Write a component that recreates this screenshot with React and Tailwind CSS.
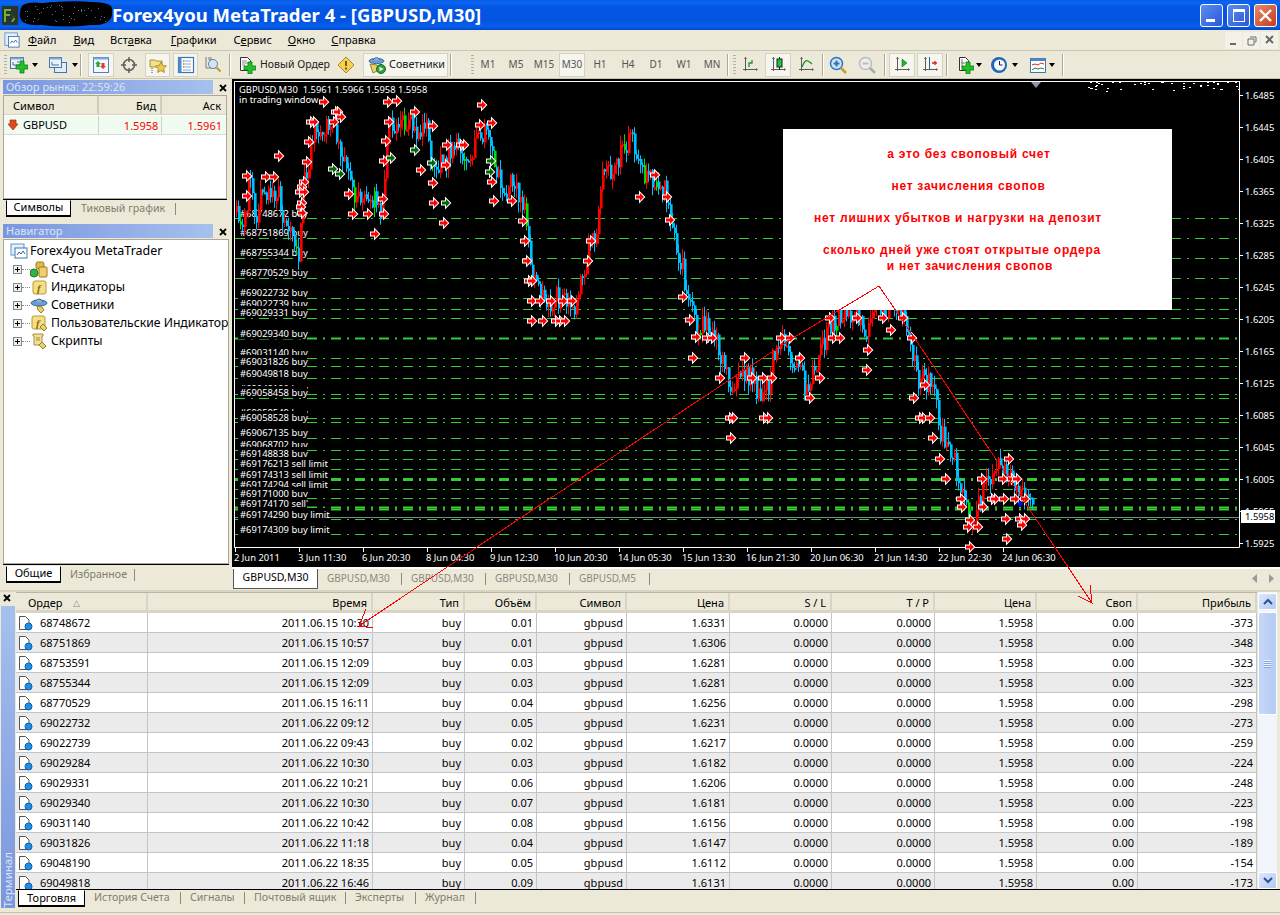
import React from "react";

const keys = [[236,212],[241,222],[246,205],[250,170],[255,225],[262,185],[270,190],[280,200],[285,225],[292,238],[298,250],[302,195],[310,145],[316,128],[320,140],[326,118],[335,135],[345,155],[352,192],[362,205],[372,195],[380,210],[386,150],[389,110],[395,130],[405,122],[415,128],[425,128],[435,175],[445,160],[452,145],[462,155],[470,150],[480,128],[490,135],[497,175],[505,185],[515,190],[525,210],[530,260],[540,290],[550,300],[560,295],[570,305],[578,300],[585,260],[595,230],[603,175],[612,175],[620,155],[628,135],[635,145],[645,175],[655,180],[665,195],[672,230],[680,260],[688,300],[695,330],[705,325],[715,340],[725,375],[735,385],[745,375],[755,385],[765,395],[775,350],[785,345],[795,365],[805,385],[815,375],[825,340],[835,320],[845,310],[855,320],[865,335],[875,310],[890,305],[905,315],[912,350],[918,380],[930,380],[940,430],[950,450],[960,480],[970,520],[975,510],[985,490],[995,465],[1005,475],[1015,480],[1025,495],[1033,513]];

function rng(seed) {
  let s = seed;
  return () => {
    s = (s * 1664525 + 1013904223) >>> 0;
    return s / 4294967296;
  };
}
function priceAt(x) {
  for (let i = 1; i < keys.length; i++) {
    if (x <= keys[i][0]) {
      const [a, b] = keys[i - 1];
      const [c, d] = keys[i];
      return b + ((d - b) * (x - a)) / (c - a);
    }
  }
  return keys[keys.length - 1][1];
}
function buildBars() {
  const r = rng(77);
  const out = [];
  let prev = priceAt(236);
  for (let x = 236; x <= 1033; x += 2) {
    const c = priceAt(x) + (r() - 0.5) * 26;
    const top = Math.min(prev, c);
    const bot = Math.max(prev, c);
    const up = c < prev;
    const lime = r() < 0.03;
    out.push({ x, top, bot: Math.max(bot, top + 2), hi: top - r() * 10, lo: bot + r() * 10, color: lime ? "#00E000" : up ? "#FF0000" : "#00BFFF" });
    prev = c;
  }
  return out;
}
const bars = buildBars();

const arrows = [[324,102],[336,112],[338,112],[341,117],[311,122],[314,122],[334,122],[388,102],[397,101],[415,112],[433,126],[482,105],[480,125],[492,123],[247,176],[266,177],[274,177],[279,156],[247,196],[309,142],[307,162],[304,182],[302,187],[300,192],[304,192],[302,203],[301,207],[302,213],[349,194],[353,214],[368,214],[384,214],[375,234],[386,141],[384,161],[383,199],[389,122],[421,170],[433,183],[434,203],[447,145],[461,145],[464,145],[446,165],[444,223],[492,182],[494,201],[512,201],[523,221],[525,241],[527,261],[529,281],[532,281],[532,301],[540,301],[551,301],[563,301],[572,301],[532,321],[543,321],[556,321],[560,321],[565,321],[588,261],[591,241],[640,197],[655,175],[667,197],[670,220],[683,297],[690,320],[696,337],[693,358],[707,338],[712,338],[720,378],[730,418],[733,418],[731,438],[745,358],[752,378],[763,378],[772,378],[764,418],[768,418],[781,338],[790,338],[800,358],[810,398],[820,378],[830,318],[833,338],[840,338],[857,318],[868,350],[867,370],[883,318],[891,330],[903,318],[912,338],[925,385],[914,398],[920,418],[923,418],[930,418],[933,438],[940,459],[946,479],[961,499],[962,507],[970,520],[968,527],[978,527],[970,547],[982,479],[983,507],[992,499],[995,499],[1003,479],[1012,479],[1017,479],[1004,499],[1015,499],[1025,499],[1006,519],[1020,519],[1025,519],[1022,525],[1007,539],[1009,459]];
const greenArrows = [[333,169],[340,174],[391,158],[415,150],[432,163],[446,203],[491,161],[490,172]];

const lines = [[218,1],[238,1],[258,1],[278,1],[298,1],[309,1],[318,1],[338,2],[358,1],[366,1],[378,1],[394,1],[398,1],[418,1],[422,1],[438,1],[450,1],[459,1],[469,1],[479,3],[489,1],[498,1],[507,2],[509,2],[519,1],[534,1]];

const labels = [[213,"#68748672 buy"],[232,"#68751869 buy"],[252,"#68755344 buy"],[272,"#68770529 buy"],[292,"#69022732 buy"],[303,"#69022739 buy"],[312,"#69029331 buy"],[333,"#69029340 buy"],[352,"#69031140 buy"],[361,"#69031826 buy"],[373,"#69049818 buy"],[388,"#69048190 buy"],[392,"#69058458 buy"],[412,"#69058549 buy"],[417,"#69058528 buy"],[432,"#69067135 buy"],[444,"#69068702 buy"],[453,"#69148838 buy"],[463,"#69176213 sell limit"],[474,"#69174313 sell limit"],[484,"#69174294 sell limit"],[493,"#69171000 buy"],[503,"#69174170 sell'"],[514,"#69174290 buy limit"],[529,"#69174309 buy limit"]];

const priceTicks = ["1.6485","1.6445","1.6405","1.6365","1.6325","1.6285","1.6245","1.6205","1.6165","1.6125","1.6085","1.6045","1.6005","1.5965","1.5925"];
const timeTicks = ["2 Jun 2011","3 Jun 11:30","6 Jun 20:30","8 Jun 04:30","9 Jun 12:30","10 Jun 20:30","14 Jun 05:30","15 Jun 13:30","16 Jun 21:30","20 Jun 06:30","21 Jun 14:30","22 Jun 22:30","24 Jun 06:30"];

const speckRand = rng(9);
const specks = Array.from({ length: 60 }, () => [1085 + speckRand() * 155, 81 + Math.pow(speckRand(), 2) * 10]);

const scribbleRand = rng(21);
const scribble = Array.from({ length: 46 }, () => [22 + scribbleRand() * 86, 5 + scribbleRand() * 18]);

function Arrow({ x, y, fill }) {
  return (
    <path
      d={`M${x - 4} ${y - 1.5}h4v-2.500l4 4l-4 4v-2.500h-4z`}
      fill={fill}
      stroke="#fff"
      strokeWidth="2"
      paintOrder="stroke"
    />
  );
}

const FS = "9.400";

function Chart() {
  return (
    <svg viewBox="232 79 1048 488" className="block w-[1048px] h-[488px]" style={{ fontFamily: "'Noto Sans',sans-serif" }}>
      <rect x="232" y="79" width="1048" height="488" fill="#000" />
      <path d="M234.500 81.500H1240M234.500 81.500V547.500H1239.500V81.500" fill="none" stroke="#fff" />
      {specks.map(([x, y], i) => (
        <rect key={i} x={Math.round(x)} y={Math.round(y)} width="2" height="1" fill="#fff" />
      ))}
      <path d="M1031 82h10l-5 6z" fill="#8a93a8" />
      {lines.map(([y, w]) => (
        <line key={y} x1="235" x2="1239" y1={y + 0.5} y2={y + 0.5} stroke="#32CD32" strokeWidth={w} strokeDasharray="10 6 2 6" />
      ))}
      <line x1="235" x2="1239" y1="517.500" y2="517.500" stroke="#7d8694" />
      {labels.map(([y, t]) => (
        <g key={t}>
          <rect x="238" y={y - 6} width={t.length > 15 ? 88 : 69} height="12" fill="#000" />
          <text x="240" y={y + 3.5} fontSize={FS} fill="#fff">{t}</text>
        </g>
      ))}
      {bars.map((b) => (
        <g key={b.x}>
          <rect x={b.x} y={b.hi} width="1" height={b.lo - b.hi} fill={b.color} />
          <rect x={b.x} y={b.top} width="2.600" height={b.bot - b.top} fill={b.color} />
        </g>
      ))}
      {arrows.map(([x, y], i) => (
        <Arrow key={i} x={x} y={y} fill="#FF0000" />
      ))}
      {greenArrows.map(([x, y], i) => (
        <Arrow key={i} x={x} y={y} fill="#006400" />
      ))}
      <path d="M1018 504h5M1020 501v6" stroke="#0000ff" strokeWidth="2" />
      <text x="239" y="93" fontSize={FS} fill="#fff" className="whitespace-pre">GBPUSD,M30  1.5961 1.5966 1.5958 1.5958</text>
      <text x="239" y="103" fontSize={FS} fill="#fff">in trading window</text>
      {priceTicks.map((t, i) => (
        <g key={t}>
          <line x1="1240" x2="1243" y1={95.5 + i * 32} y2={95.5 + i * 32} stroke="#fff" />
          <text x="1245" y={99 + i * 32} fontSize={FS} fill="#fff">{t}</text>
        </g>
      ))}
      {timeTicks.map((t, i) => (
        <g key={t}>
          <line x1={235.5 + i * 64} x2={235.5 + i * 64} y1="548" y2="552" stroke="#fff" />
          <text x={234 + i * 64} y="561" fontSize={FS} fill="#fff">{t}</text>
        </g>
      ))}
      <rect x="1241" y="510" width="34" height="13" fill="#fff" />
      <text x="1245" y="520" fontSize={FS} fill="#000">1.5958</text>
    </svg>
  );
}

function Plus({ x = 8, y = 8, s = 9 }) {
  const t = s / 3;
  return (
    <path
      d={`M${x + t} ${y}h${t}v${t}h${t}v${t}h${-t}v${t}h${-t}v${-t}h${-t}v${-t}h${t}z`}
      fill="#22C02A"
      stroke="#0E7A14"
      strokeWidth="0.8"
    />
  );
}
function Ico({ children, w = 18, h = 18 }) {
  return (
    <svg width={w} height={h} viewBox="0 0 18 18" fill="none" className="block shrink-0">
      {children}
    </svg>
  );
}
const WinBase = ({ x = 0.5, y = 1.5, w = 12, h = 10 }) => (
  <>
    <rect x={x} y={y} width={w} height={h} fill="#EAF1FB" stroke="#3E76B0" />
    <rect x={x} y={y} width={w} height="2" fill="#7FA8D8" />
  </>
);
const NewChartIcon = () => (
  <Ico><WinBase w={13} h={11} /><path d="M3 6v3h7M8 5v2" stroke="#667" /><Plus x={6} y={5} s={12} /></Ico>
);
const ProfilesIcon = () => (
  <Ico><rect x="5.500" y="6.500" width="12" height="10" fill="#E2ECF8" stroke="#3E76B0" /><WinBase w={12} h={10} /><path d="M3 6v3h7" stroke="#667" /></Ico>
);
const MarketIcon = () => (
  <Ico><rect x="1.500" y="1.500" width="15" height="15" fill="#F4F8FD" stroke="#4A82C0" /><rect x="1.500" y="1.500" width="15" height="2" fill="#7FA8D8" /><path d="M6 5l3 3H7.500v3h-3V8H3z" fill="#25A535" /><path d="M11 13l3-3h-1.500V7h-3v3H8z" fill="#E03A2A" /></Ico>
);
const CrossIcon = () => (
  <Ico><circle cx="9" cy="9" r="5.500" stroke="#5E5E5E" strokeWidth="1.500" /><path d="M9 1v5M9 12v5M1 9h5M12 9h5" stroke="#5E5E5E" strokeWidth="1.500" /></Ico>
);
const FolderStarIcon = () => (
  <Ico><path d="M1 4h5l1 1h6v6H1z" fill="#F4E08A" stroke="#A88F38" /><path d="M12 6l1.700 3.500 3.800.5-2.800 2.600.7 3.900-3.400-1.900-3.400 1.900.7-3.900L6.500 10l3.800-.5z" fill="#F1C94A" stroke="#A07F20" strokeWidth="0.8" /><path d="M3 12v5" stroke="#555" strokeDasharray="1 1" /></Ico>
);
const NavIcon = () => (
  <Ico><rect x="1.500" y="1.500" width="15" height="15" fill="#fff" stroke="#3974B4" strokeWidth="1.200" /><rect x="1.500" y="1.500" width="3" height="15" fill="#4E8CCB" /><path d="M6 5h8M6 8h8M6 11h8M6 14h8" stroke="#8AA9CC" /><path d="M6 5h1M6 8h1M6 11h1" stroke="#E04030" /></Ico>
);
const MagChartIcon = () => (
  <Ico><path d="M2 1v11h10M5 1v3h2V1" stroke="#7B7B7B" /><circle cx="9" cy="8" r="4.500" fill="#D5E4F5" stroke="#5F87AE" /><path d="M12.500 11.500l4 4" stroke="#C49A30" strokeWidth="2.200" /></Ico>
);
const NewOrderIcon = () => (
  <Ico><path d="M2.500 1.500h7l3 3v10h-10z" fill="#fff" stroke="#333" /><path d="M4 5h5M4 7h6M4 9h3" stroke="#888" /><Plus x={6} y={6} s={12} /></Ico>
);
const AlertIcon = () => (
  <Ico><path d="M9 1l8 8-8 8-8-8z" fill="#F6D24E" stroke="#A8862A" /><path d="M9 5v5M9 11.500v2" stroke="#6B4C10" strokeWidth="1.800" /></Ico>
);
const ExpertIcon = () => (
  <Ico><ellipse cx="8.500" cy="5" rx="7.500" ry="2.600" fill="#6E9BD0" stroke="#3C6A9E" /><path d="M5 4q3.500-5 7 0" fill="#8CB4E0" stroke="#3C6A9E" /><path d="M2 8l7 1 2 5-6 3z" fill="#EBCF70" stroke="#9A7F2A" /><circle cx="13" cy="13" r="4.500" fill="#2E9F3A" stroke="#156C20" /><path d="M11.500 10.800l4 2.200-4 2.200z" fill="#fff" /></Ico>
);
const Axes = ({ children }) => (
  <Ico><path d="M4.500 1v14M2 13.500h14" stroke="#5A5A5A" /><path d="M15 12l2 1.500-2 1.500" fill="#5A5A5A" /><path d="M3 3l1.500-2L6 3" fill="#5A5A5A" />{children}</Ico>
);
const BarIcon = () => <Axes><path d="M8 11V7h3V4" stroke="#1C8F2C" strokeWidth="1.300" /></Axes>;
const CandleIcon = () => <Axes><path d="M10.500 1v13" stroke="#222" /><rect x="8" y="3" width="5" height="8" fill="#16C83A" stroke="#222" /></Axes>;
const LineIcon = () => <Axes><path d="M5 11q3-8 6-6 2 1 4 3" stroke="#1C8F2C" strokeWidth="1.300" /></Axes>;
const ShiftIcon = () => <Axes><path d="M9 3v8l5-4z" fill="#1FB030" stroke="#128020" strokeWidth="0.600" /></Axes>;
const ScaleIcon = () => <Axes><path d="M8.500 1v12" stroke="#2A5FA8" /><path d="M11 7h5M14 5v4" stroke="#D02820" strokeWidth="1.300" /></Axes>;
const ZoomIcon = ({ plus, gray }) => {
  const c = gray ? "#B8BDC2" : "#2E74BC";
  return (
    <Ico><circle cx="7.500" cy="7.500" r="6" fill={gray ? "#EDEDED" : "#CFE3F7"} stroke={c} strokeWidth="1.500" /><path d="M4.500 7.500h6" stroke={c} strokeWidth="2" />{plus && <path d="M7.500 4.500v6" stroke={c} strokeWidth="2" />}<path d="M12 12l5 5" stroke={gray ? "#AAAAAA" : "#C79B2C"} strokeWidth="2.500" /></Ico>
  );
};
const AddIcon = () => (
  <Ico><path d="M3.500 1.500h6l3 3v10h-9z" fill="#fff" stroke="#333" /><path d="M6 3v9M5 7h4" stroke="#777" /><Plus x={6} y={6} s={12} /></Ico>
);
const ClockIcon = () => (
  <Ico><circle cx="9" cy="9" r="8" fill="#1F67B8" /><circle cx="9.500" cy="9" r="5.500" fill="#F4F7FB" /><path d="M9.500 5v4h3" stroke="#223" /></Ico>
);
const TemplateIcon = () => (
  <Ico><rect x="1.500" y="2.500" width="15" height="14" fill="#fff" stroke="#3E76B0" /><rect x="1.500" y="2.500" width="15" height="2.500" fill="#4C86C4" /><path d="M3 9l3-1 3 1 3-2 3 1" stroke="#D83020" /><path d="M3 14l3-2 3 1 3-1 3 1" stroke="#1C8F2C" /></Ico>
);

const Drop = () => <span className="block shrink-0 w-0 h-0 border-x-[3px] border-x-transparent border-t-[4px] border-t-black" />;
const Sep = ({ w = "" }) => <span className={`block shrink-0 w-[1px] h-[22px] bg-[#ACA899] border-r border-white box-content ${w}`} />;
const Grip = () => <span className="block shrink-0 w-[3px] h-[20px] bg-[repeating-linear-gradient(180deg,#B4B09C_0,#B4B09C_1px,transparent_1px,transparent_3px)]" />;
const Btn = ({ on, children, className = "" }) => (
  <span
    className={`flex items-center justify-center h-[24px] w-[26px] shrink-0 border ${on ? "border-[#D5D2C2] bg-[#F6F5EE]" : "border-transparent"} ${className}`}
  >
    {children}
  </span>
);
const Tf = ({ t, on }) => (
  <span className={`flex items-center justify-center h-[24px] w-[26px] mr-[2px] shrink-0 text-[10px] text-[#555] border ${on ? "border-[#D5D2C2] bg-[#F6F5EE]" : "border-transparent"}`}>
    {t}
  </span>
);

function TitleBar() {
  return (
    <div className="relative flex items-center h-[30px] shrink-0 bg-[linear-gradient(180deg,#0A5AE8_0%,#0A66F0_8%,#0355E4_25%,#0354E0_70%,#0660EE_88%,#0347C8_100%)]">
      <svg width="112" height="30" viewBox="0 0 112 30" className="block shrink-0">
        <rect x="2" y="6" width="16" height="19" fill="#27352A" />
        <path d="M4 9h7v2H6v3h4v2H6v6H4zM11 13l3 4-3 5h2l2-3 2 3" fill="#6FAF3F" />
        <path d="M22 6q4-5 20-3 30-3 50-1 14 0 19 4 3 6 0 12-4 8-20 7-25 3-50 0-16 1-20-5-3-7 1-14z" fill="#000" />
        {scribble.map(([x, y], i) => (
          <rect key={i} x={Math.round(x)} y={Math.round(y)} width="1" height="1" fill="#5A6A9A" />
        ))}
      </svg>
      <span className="text-white font-bold text-[18.500px] leading-none whitespace-nowrap font-['Noto_Sans',sans-serif]">
        Forex4you MetaTrader 4 - [GBPUSD,M30]
      </span>
      <div className="ml-auto mr-[3px] flex gap-[4px]">
        <span className="relative w-[23px] h-[23px] rounded-[3px] border border-white bg-[linear-gradient(135deg,#5C8EF0,#2A58D8)]">
          <span className="absolute left-[5px] bottom-[4px] w-[9px] h-[3px] bg-white" />
        </span>
        <span className="relative w-[23px] h-[23px] rounded-[3px] border border-white bg-[linear-gradient(135deg,#5C8EF0,#2A58D8)]">
          <span className="absolute left-[5px] top-[4px] w-[12px] h-[13px] border border-white border-t-[3px]" />
        </span>
        <span className="flex items-center justify-center w-[23px] h-[23px] rounded-[3px] border border-white bg-[linear-gradient(135deg,#E8896E,#C73A1C)]">
          <svg width="15" height="15" viewBox="0 0 15 15"><path d="M2 2l11 11M13 2L2 13" stroke="#fff" strokeWidth="2.400" /></svg>
        </span>
      </div>
    </div>
  );
}

const menu = [
  ["", "Ф", "айл", "ml-[28px]"],
  ["", "В", "ид", "ml-[17px]"],
  ["Вст", "а", "вка", "ml-[16px]"],
  ["", "Г", "рафики", "ml-[19px]"],
  ["С", "е", "рвис", "ml-[17px]"],
  ["", "О", "кно", "ml-[16px]"],
  ["", "С", "правка", "ml-[16px]"],
];
function MenuBar() {
  return (
    <div className="relative flex items-center h-[20px] shrink-0 text-[11px] text-black">
      <svg width="16" height="16" viewBox="0 0 18 18" className="absolute left-[4px] top-[2px]">
        <rect x="1" y="1" width="14" height="14" fill="#E6F0FB" stroke="#5E93CF" />
        <rect x="5" y="5" width="12" height="12" fill="#fff" stroke="#3E76B0" />
        <path d="M7 13l2-3 2 2 2-3 2 3" stroke="#2A6AB0" fill="none" />
      </svg>
      {menu.map(([a, u, b, cl]) => (
        <span key={u + b} className={`${cl} whitespace-nowrap`}>
          {a}<u>{u}</u>{b}
        </span>
      ))}
      <div className="ml-auto flex mr-[1px]">
        {["M2 10h6", "M4 3h6v5h-1M2 5h6v6H2z", "M2 2l7 7M9 2L2 9"].map((d, i) => (
          <span key={d} className="flex items-center justify-center w-[17px] h-[17px] mr-[1px] bg-[#F4F2E8]">
            <svg width="11" height="12" viewBox="0 0 11 12" fill="none"><path d={d} stroke="#6a6a6a" strokeWidth={i === 1 ? 1 : 2} /></svg>
          </span>
        ))}
      </div>
    </div>
  );
}

function Toolbar() {
  return (
    <div className="flex items-center h-[29px] shrink-0 border-y border-y-[#C9C6B4] text-[#222]">
      <span className="w-[4px] shrink-0" />
      <Grip />
      <span className="ml-[3px]"><NewChartIcon /></span>
      <span className="ml-[4px]"><Drop /></span>
      <span className="ml-[11px]"><ProfilesIcon /></span>
      <span className="ml-[5px]"><Drop /></span>
      <Sep w="ml-[2px] mr-[6px]" />
      <Btn on><MarketIcon /></Btn>
      <Btn className="ml-[2px]"><CrossIcon /></Btn>
      <Btn on className="ml-[3px] !w-[25px]"><FolderStarIcon /></Btn>
      <Btn on className="ml-[3px] !w-[25px]"><NavIcon /></Btn>
      <Btn className="ml-[2px]"><MagChartIcon /></Btn>
      <Sep w="ml-[3px]" />
      <span className="ml-[7px]"><NewOrderIcon /></span>
      <span className="ml-[4px] whitespace-nowrap w-[77px] text-[10.500px]">Новый Ордер</span>
      <AlertIcon />
      <Btn on className="ml-[8px] !w-[85px] !justify-start pl-[4px] gap-[3px] text-[10.800px]"><ExpertIcon /><span className="whitespace-nowrap">Советники</span></Btn>
      <Sep w="ml-[2px]" />
      <span className="w-[19px]" />
      <Grip />
      <span className="w-[1px]" />
      <Tf t="M1" /><Tf t="M5" /><Tf t="M15" /><Tf t="M30" on /><Tf t="H1" /><Tf t="H4" /><Tf t="D1" /><Tf t="W1" /><Tf t="MN" />
      <Sep w="mr-[4px]" />
      <Grip />
      <span className="w-[1px]" />
      <Btn><BarIcon /></Btn><Btn on className="ml-[2px]"><CandleIcon /></Btn><Btn className="ml-[2px]"><LineIcon /></Btn>
      <Sep w="ml-[3px] mr-[1px]" />
      <Btn><ZoomIcon plus /></Btn><Btn className="ml-[3px]"><ZoomIcon gray /></Btn>
      <Sep w="ml-[4px] mr-[3px]" />
      <Btn on><ShiftIcon /></Btn><Btn on className="ml-[2px]"><ScaleIcon /></Btn>
      <Sep w="ml-[3px]" />
      <span className="ml-[8px]"><AddIcon /></span>
      <span className="ml-[2px]"><Drop /></span>
      <span className="ml-[8px]"><ClockIcon /></span>
      <span className="ml-[4px]"><Drop /></span>
      <span className="ml-[11px]"><TemplateIcon /></span>
      <span className="ml-[2px]"><Drop /></span>
      <span className="ml-[7px]"><Sep /></span>
    </div>
  );
}

const PanelTitle = ({ t }) => (
  <div className="flex items-center h-[14px] shrink-0">
    <div className="ml-[3px] w-[210px] h-full flex items-center pl-[3px] text-[11px] text-[#DCE5F7] bg-[linear-gradient(90deg,#7A96DE,#A6C0EE)]">{t}</div>
    <span className="ml-[3px] w-[14px] text-center">
      <svg width="8" height="8" viewBox="0 0 8 8" className="inline-block"><path d="M1 1l6 6M7 1L1 7" stroke="#000" strokeWidth="1.800" /></svg>
    </span>
  </div>
);

const TabActive = ({ t, cl }) => (
  <span className={`flex items-center justify-center h-[17px] -mt-[1px] bg-white border-x border-b-2 border-t border-black border-x-black border-t-white text-[11px] text-black shrink-0 ${cl}`}>{t}</span>
);
const TabIdle = ({ t, cl = "pl-[9px]" }) => (
  <span className={`flex items-center h-[12px] whitespace-nowrap text-[10.600px] text-[#7F7D70] border-r border-[#8D8B7F] shrink-0 ${cl}`}>{t}</span>
);

function LeftColumn() {
  return (
    <div className="w-[232px] shrink-0 flex flex-col pt-[1px]">
      <PanelTitle t="Обзор рынка: 22:59:26" />
      <div className="ml-[3px] mr-[5px] mt-[1px] h-[104px] bg-white border border-[#ACA899] flex flex-col text-[11px]">
        <div className="flex h-[19px] shrink-0 bg-[#ECE9D8] border-b border-[#D8D4C0]">
          <span className="w-[95px] pl-[9px] leading-[19px] border-r-2 border-[#D0CDBC]">Символ</span>
          <span className="w-[64px] pr-[4px] text-right leading-[19px] border-r-2 border-[#D0CDBC]">Бид</span>
          <span className="w-[64px] pr-[5px] text-right leading-[19px]">Аск</span>
        </div>
        <div className="flex items-center h-[19px] mt-[1px] bg-[#F1FCF1] border-b border-[#DADADA]">
          <span className="w-[95px] flex items-center border-r border-[#D0D0D0] h-full">
            <svg width="12" height="12" viewBox="0 0 12 12" className="ml-[3px] mr-[4px] shrink-0"><path d="M3 1h6v4h2L6 11 1 5h2z" fill="#E04A20" stroke="#A03010" strokeWidth="0.700" /></svg>
            GBPUSD
          </span>
          <span className="w-[64px] h-full leading-[19px] text-right pr-[3px] text-[#FF0000] border-r border-[#D0D0D0]">1.5958</span>
          <span className="w-[64px] h-full leading-[19px] text-right pr-[4px] text-[#FF0000]">1.5961</span>
        </div>
      </div>
      <div className="ml-[3px] mr-[5px] flex items-center h-[18px] border-t border-black">
        <TabActive t="Символы" cl="ml-[3px] w-[65px]" />
        <TabIdle t="Тиковый график" cl="pl-[10px] w-[105px]" />
      </div>
      <div className="mt-[7px]"><PanelTitle t="Навигатор" /></div>
      <div className="ml-[3px] mr-[3px] mt-[1px] h-[325px] bg-white border border-[#ACA899] flex flex-col text-[12.500px] text-black overflow-hidden whitespace-nowrap">
        <div className="flex items-center h-[18px] mt-[2px] pl-[6px] gap-[2px]">
          <svg width="18" height="16" viewBox="0 0 18 16"><rect x="1" y="1" width="13" height="11" fill="#E6F0FB" stroke="#5E93CF" /><rect x="5" y="5" width="12" height="10" fill="#fff" stroke="#3E76B0" /><path d="M7 12l2-3 2 2 2-3 2 3" stroke="#2A6AB0" fill="none" /></svg>
          Forex4you MetaTrader
        </div>
        {[
          ["Счета", <svg key="a" width="18" height="17" viewBox="0 0 18 17"><rect x="6" y="1" width="8" height="7" rx="2" fill="#E5B948" stroke="#9A7A20" /><rect x="9" y="6" width="8" height="10" rx="1" fill="#EFD06A" stroke="#9A7A20" /><circle cx="4" cy="12" r="4" fill="#36B23E" stroke="#1E7A24" /></svg>],
          ["Индикаторы", <svg key="b" width="15" height="15" viewBox="0 0 15 15"><rect x="1" y="1" width="13" height="13" rx="2" fill="#F5DF86" stroke="#B59A3A" /><text x="5" y="12" fontSize="11" fontStyle="italic" fontWeight="bold" fill="#8A6A10" fontFamily="Liberation Serif, serif">f</text></svg>],
          ["Советники", <svg key="c" width="18" height="17" viewBox="0 0 18 17"><ellipse cx="9" cy="6" rx="8" ry="3" fill="#6E9BD0" stroke="#3C6A9E" /><path d="M5 5q4-6 8 0" fill="#8CB4E0" stroke="#3C6A9E" /><path d="M7 9l5 1 2 3-3 3-3-3z" fill="#EBCF70" stroke="#9A7F2A" /></svg>],
          ["Пользовательские Индикатор", <svg key="d" width="17" height="17" viewBox="0 0 17 17"><rect x="1" y="1" width="13" height="13" rx="2" fill="#F5DF86" stroke="#B59A3A" /><text x="5" y="12" fontSize="11" fontStyle="italic" fontWeight="bold" fill="#8A6A10" fontFamily="Liberation Serif, serif">f</text><path d="M12 9l4 4-3 3-4-4z" fill="#EBCF70" stroke="#9A7F2A" /></svg>],
          ["Скрипты", <svg key="e" width="17" height="17" viewBox="0 0 17 17"><path d="M2 1h10v2h-1v9H3V3H2z" fill="#F1DE9A" stroke="#A68F3E" /><path d="M5 5h4M5 7h4" stroke="#A68F3E" /><path d="M11 9l4 4-3 3-4-4z" fill="#EBCF70" stroke="#9A7F2A" /></svg>],
        ].map(([t, icon]) => (
          <div key={t} className="flex items-center h-[18px] pl-[9px]">
            <span className="relative block w-[9px] h-[9px] border border-[#7B8A9A] bg-[#F2F0E6] shrink-0">
              <span className="absolute left-[1px] top-[3px] w-[5px] h-[1px] bg-black" />
              <span className="absolute left-[3px] top-[1px] w-[1px] h-[5px] bg-black" />
            </span>
            <span className="w-[8px] h-0 border-t border-dotted border-[#8a8a8a] shrink-0" />
            <span className="w-[18px] flex justify-center shrink-0">{icon}</span>
            <span className="ml-[3px] text-[12.200px]">{t}</span>
          </div>
        ))}
      </div>
      <div className="ml-[3px] mr-[3px] flex items-center h-[20px] border-t border-black">
        <TabActive t="Общие" cl="ml-[3px] w-[55px]" />
        <TabIdle t="Избранное" cl="pl-[9px] w-[74px]" />
      </div>
    </div>
  );
}

const rows = [
  ["68748672","2011.06.15 10:30","0.01","1.6331","-373"],
  ["68751869","2011.06.15 10:57","0.01","1.6306","-348"],
  ["68753591","2011.06.15 12:09","0.03","1.6281","-323"],
  ["68755344","2011.06.15 12:09","0.03","1.6281","-323"],
  ["68770529","2011.06.15 16:11","0.04","1.6256","-298"],
  ["69022732","2011.06.22 09:12","0.05","1.6231","-273"],
  ["69022739","2011.06.22 09:43","0.02","1.6217","-259"],
  ["69029284","2011.06.22 10:30","0.03","1.6182","-224"],
  ["69029331","2011.06.22 10:21","0.06","1.6206","-248"],
  ["69029340","2011.06.22 10:30","0.07","1.6181","-223"],
  ["69031140","2011.06.22 10:42","0.08","1.6156","-198"],
  ["69031826","2011.06.22 11:18","0.04","1.6147","-189"],
  ["69048190","2011.06.22 18:35","0.05","1.6112","-154"],
  ["69049818","2011.06.22 16:46","0.09","1.6131","-173"],
];
const GRID = "grid grid-cols-[132px_225px_92px_72px_90px_103px_102px_103px_102px_101px_119px]";
const heads = ["Время","Тип","Объём","Символ","Цена","S / L","T / P","Цена","Своп","Прибыль"];

const DocBall = () => (
  <svg width="15" height="16" viewBox="0 0 15 16" className="shrink-0">
    <path d="M1.500 1.500h6l3.500 3.500v9.500h-9.500z" fill="#fff" stroke="#555" />
    <circle cx="10.500" cy="11.500" r="3.500" fill="#1E8FE8" stroke="#0E5CA8" />
  </svg>
);

function Terminal() {
  return (
    <div className="relative flex flex-1 min-h-0 border-t-2 border-[#D8D4C4]">
      <div className="w-[16px] shrink-0 flex flex-col items-center">
        <svg width="8" height="8" viewBox="0 0 8 8" className="mt-[2px] mb-[4px] ml-[-3px]"><path d="M1 1l6 6M7 1L1 7" stroke="#000" strokeWidth="1.800" /></svg>
        <div className="flex-1 w-[14px] -ml-[1px] flex items-end justify-center bg-[linear-gradient(0deg,#7A96DE,#A6C0EE)]">
          <span className="[writing-mode:vertical-rl] rotate-180 text-[11.500px] text-[#DCE5F7] leading-[14px] pb-[1px] pt-[1px]">Терминал</span>
        </div>
      </div>
      <div className="flex flex-col flex-1 min-w-0">
        <div className="flex flex-1 min-h-0">
          <div className="w-[1241px] overflow-hidden text-[11px] text-black">
            <div className={`${GRID} h-[21px] bg-[#ECE9D8] border-b-[3px] border-[#D9D5C6] border-t border-t-[#B9B6A6]`}>
              <span className="relative pl-[12px] leading-[19px] border-r-2 border-[#D8D5C6]">Ордер<span className="absolute left-[57px] top-[0px] text-[#8a8a8a] text-[9px]">△</span></span>
              {heads.map((h, i) => (
                <span key={i} className="text-right pr-[4px] leading-[19px] border-r-2 border-[#D8D5C6]">{h}</span>
              ))}
            </div>
            {rows.map((r, i) => (
              <div key={r[0]} className={`${GRID} h-[20px] leading-[19px] ${i % 2 ? "bg-[#EBEBEB]" : "bg-white"}`}>
                {[
                  null, r[1], "buy", r[2], "gbpusd", r[3], "0.0000", "0.0000", "1.5958", "0.00", r[4],
                ].map((v, j) =>
                  j === 0 ? (
                    <span key={0} className="flex items-center pl-[2px] gap-[7px] border-r border-b border-[#C4C4C4]"><DocBall />{r[0]}</span>
                  ) : (
                    <span key={j} className="text-right pr-[3px] border-r border-b border-[#C4C4C4]">{v}</span>
                  )
                )}
              </div>
            ))}
          </div>
          <div className="w-[19px] ml-[1px] shrink-0 flex flex-col bg-[#F3F5FD]">
            <span className="flex items-center justify-center h-[17px] mt-[1px] rounded-[2px] bg-[linear-gradient(135deg,#DCE7FB,#B3C9F5)] border border-white">
              <svg width="10" height="7" viewBox="0 0 10 7"><path d="M1 6l4-4 4 4" stroke="#2F4F8F" strokeWidth="2" fill="none" /></svg>
            </span>
            <span className="flex items-center justify-center h-[103px] mt-[2px] rounded-[2px] bg-[linear-gradient(90deg,#C7D7F8,#B4CBF6)] border border-white">
              <span className="block w-[7px] h-[8px] bg-[repeating-linear-gradient(180deg,#EEF3FF_0,#EEF3FF_1px,#8CA6DC_1px,#8CA6DC_2px)]" />
            </span>
            <span className="flex-1" />
            <span className="flex items-center justify-center h-[17px] rounded-[2px] bg-[linear-gradient(135deg,#DCE7FB,#B3C9F5)] border border-white">
              <svg width="10" height="7" viewBox="0 0 10 7"><path d="M1 1l4 4 4-4" stroke="#2F4F8F" strokeWidth="2" fill="none" /></svg>
            </span>
          </div>
        </div>
        <div className="flex items-start h-[19px] shrink-0 border-t border-black pl-[2px]">
          <TabActive t="Торговля" cl="w-[67px] mt-0" />
          <div className="flex items-center h-[16px]">
            <TabIdle t="История Счета" cl="pl-[9px] w-[96px]" />
            <TabIdle t="Сигналы" cl="pl-[9px] w-[64px]" />
            <TabIdle t="Почтовый ящик" cl="pl-[9px] w-[101px]" />
            <TabIdle t="Эксперты" cl="pl-[9px] w-[70px]" />
            <TabIdle t="Журнал" cl="pl-[9px] w-[60px]" />
          </div>
        </div>
      </div>
    </div>
  );
}

export default function App() {
  return (
    <div className="relative w-[1280px] h-[915px] flex flex-col overflow-hidden bg-[#ECE9D8] font-['Noto_Sans',sans-serif] text-[11px]">
      <TitleBar />
      <MenuBar />
      <Toolbar />
      <div className="flex h-[511px] shrink-0">
        <LeftColumn />
        <div className="flex flex-col flex-1 min-w-0">
          <div className="relative h-[488px] shrink-0">
            <Chart />
            <div className="absolute left-[551px] top-[50px] w-[389px] h-[181px] bg-white text-[#FF0000] font-bold text-[12px] text-center font-['Liberation_Sans',sans-serif] tracking-[0.75px] leading-[16px] pt-[17px]">
              <div className="pr-[17px]">а это без своповый счет</div>
              <div className="pr-[18px] mt-[16px]">нет зачисления свопов</div>
              <div className="pr-[39px] mt-[16px]">нет лишних убытков и нагрузки на депозит</div>
              <div className="pr-[31px] mt-[16px]">сколько дней уже стоят открытые ордера</div>
              <div className="pr-[15px]">и нет зачисления свопов</div>
            </div>
          </div>
          <div className="flex items-center h-[21px] shrink-0 border-t-2 border-white text-[10px]">
            <span className="flex items-center justify-center h-[20px] w-[85px] ml-[1px] bg-white border-x border-b border-[#555] text-black text-[10.500px]">GBPUSD,M30</span>
            {["GBPUSD,M30","GBPUSD,M30","GBPUSD,M30","GBPUSD,M5"].map((t, i) => (
              <span key={i} className={`flex items-center h-[12px] pl-[9px] text-[#8A887C] border-r border-[#8D8B7F] whitespace-nowrap ${i === 3 ? "w-[80px]" : "w-[84px]"}`}>{t}</span>
            ))}
            <span className="ml-auto mr-[6px] flex gap-[10px]">
              <svg width="6" height="9" viewBox="0 0 6 9"><path d="M5 0v9L0 4.500z" fill="#9a9a9a" /></svg>
              <svg width="6" height="9" viewBox="0 0 6 9"><path d="M1 0v9l5-4.500z" fill="#9a9a9a" /></svg>
            </span>
          </div>
        </div>
      </div>
      <Terminal />
      <div className="h-[7px] shrink-0 pt-[4px]"><div className="h-[1px] bg-[#C4C0AE]" /></div>
      <svg width="1280" height="915" viewBox="0 0 1280 915" className="absolute left-0 top-0 pointer-events-none" fill="none" stroke="#FF0000" shapeRendering="crispEdges">
        <path d="M359 626L534 509L793 338L879 286L943 380L1092 603" />
        <path d="M1090 585L1092 603L1078 596" />
        <path d="M366 609L359 626L373 628" />
      </svg>
    </div>
  );
}
